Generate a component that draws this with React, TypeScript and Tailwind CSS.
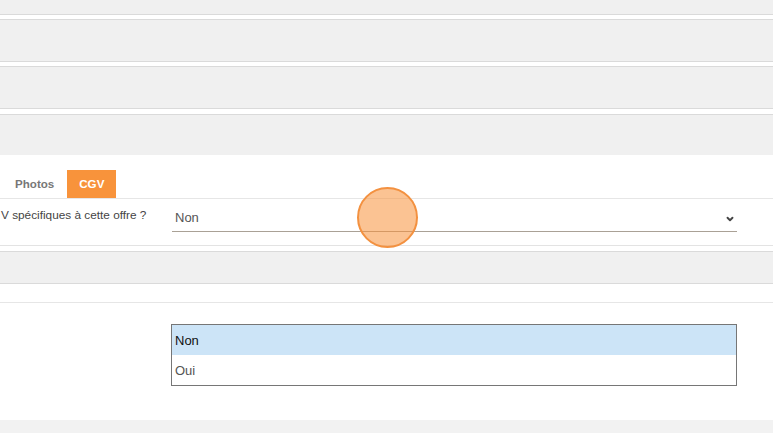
import { ChevronDown } from 'lucide-react';

// Collapsed panel header strip
function PanelHeader({ h }: { h: string }) {
  return <div className={`${h} bg-[#f0f0f0] border-y border-[#dadada]`} />;
}

export default function App() {
  return (
    <div className="relative w-[773px] h-[433px] overflow-hidden bg-white font-['Liberation_Sans',Arial,sans-serif]">
      <div className="h-[15px] bg-[#f0f0f0] border-b border-[#dadada]" />
      <div className="mt-[4px]">
        <PanelHeader h="h-[43px]" />
      </div>
      <div className="mt-[4px]">
        <PanelHeader h="h-[43px]" />
      </div>

      {/* Open panel */}
      <div className="mt-[5px]">
        <div className="h-[41px] bg-[#f0f0f0] border-t border-[#dadada]" />
        <div className="pt-[15px]">
          <div className="flex h-[29px] border-b border-[#e6e6e6]">
            <div className="h-[28px] pl-[15px] pr-[13px] flex items-center text-[11.6px] font-bold text-[#777]">
              Photos
            </div>
            <div className="h-[28px] w-[49px] flex items-center justify-center bg-[#f8933b] text-[11.6px] font-bold text-white">
              CGV
            </div>
          </div>
          <div className="flex h-[47px] border-b border-[#e3e3e3]">
            <div className="w-[172px] pt-[9px] pl-[1px] text-[11.8px] leading-[14px] text-[#444]">
              V spécifiques à cette offre ?
            </div>
            <div className="mt-[5px] w-[565px] h-[28px] flex items-center justify-between pl-[3px] pr-[2px] border-b border-[#aaa196] text-[13px] text-[#555]">
              <span>Non</span>
              <ChevronDown size={10} strokeWidth={4.5} className="text-[#444] mt-[2px]" />
            </div>
          </div>
        </div>
      </div>

      <div className="mt-[5px] h-[33px] bg-[#f0f0f0] border-y border-[#dadada]" />
      <div className="h-[19px] border-b border-[#e6e6e6]" />
      <div className="h-[117px]" />
      <div className="h-[13px] bg-[#f2f2f2]" />

      {/* Native select popup */}
      <div className="absolute left-[171px] top-[324px] w-[566px] border border-[#767676] bg-white text-[13px]">
        <div className="h-[30px] flex items-center pl-[3px] pt-[1px] bg-[#cce4f7] text-[#111]">Non</div>
        <div className="h-[30px] flex items-center pl-[3px] pt-[1px] text-[#555]">Oui</div>
      </div>

      {/* Touch indicator */}
      <div className="absolute left-[357px] top-[187px] w-[61px] h-[61px] rounded-full border-2 border-[#f39140] bg-[rgba(247,146,58,0.55)]" />
    </div>
  );
}
